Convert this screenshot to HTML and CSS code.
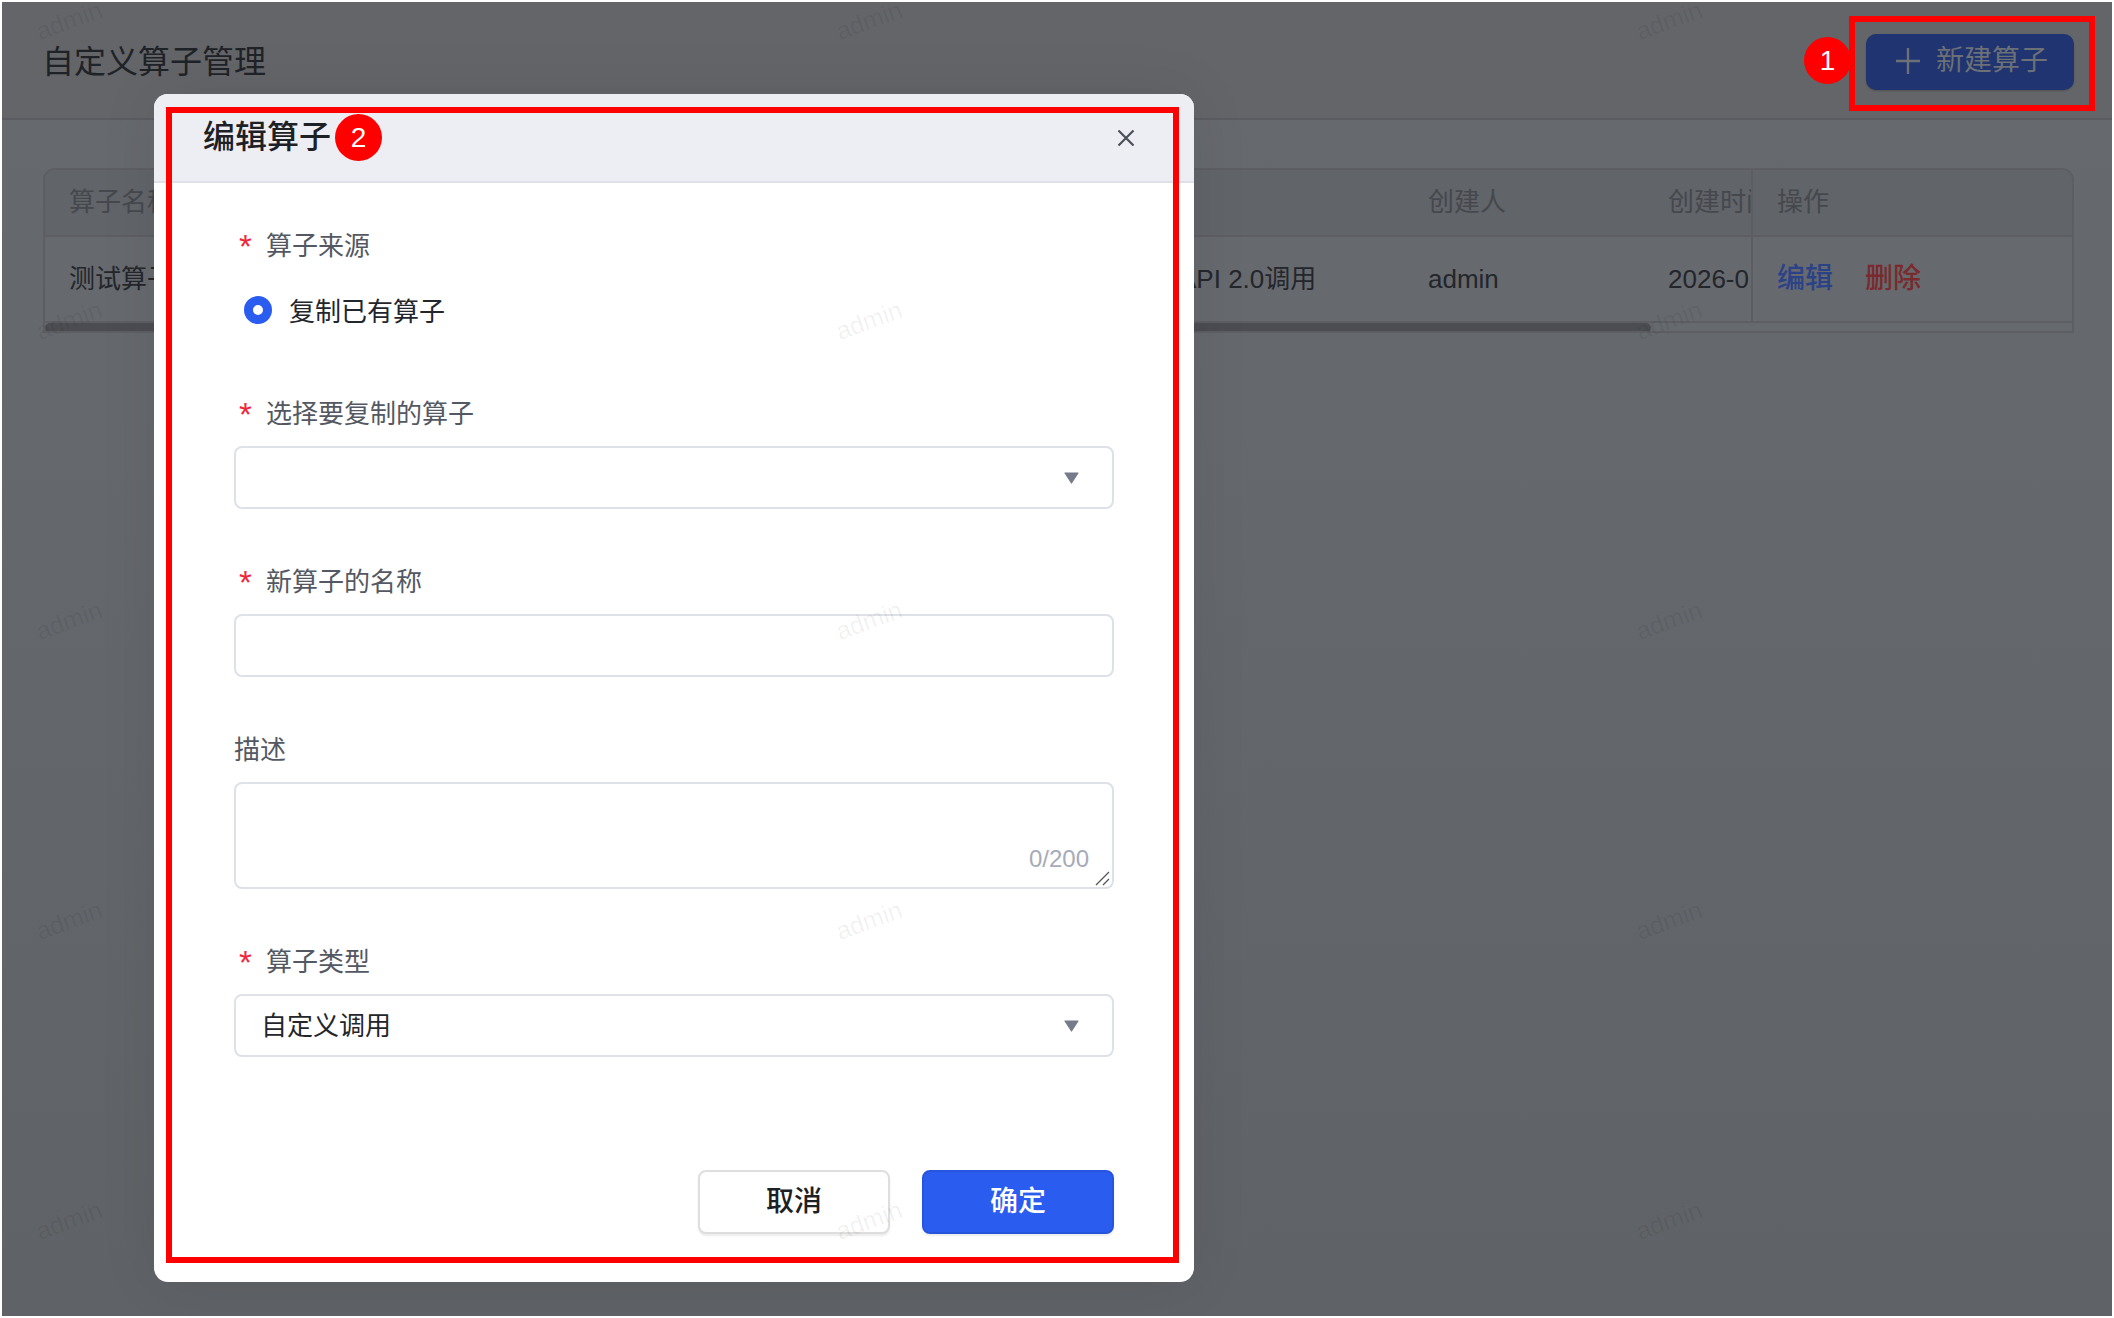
FILE: index.html
```html
<!DOCTYPE html>
<html lang="zh-CN">
<head>
<meta charset="utf-8">
<title>自定义算子管理</title>
<link rel="stylesheet" href="styles.css">
</head>
<body>
<div class="screen">
  <main class="page">
    <header class="page-header">
      <h1 class="page-title">自定义算子管理</h1>
      <button class="new-btn" type="button">
        <svg class="plus-icon" viewBox="0 0 24 26" width="24" height="26"><path d="M12 0v26M0 13h24" stroke="currentColor" stroke-width="2.4" fill="none"/></svg>
        <span>新建算子</span>
      </button>
    </header>
    <section class="table">
      <div class="table-main">
        <div class="t-row t-head">
          <div class="c c-name">算子名称</div>
          <div class="c c-type"></div>
          <div class="c c-user">创建人</div>
          <div class="c c-time">创建时间</div>
        </div>
        <div class="t-row t-body">
          <div class="c c-name">测试算子</div>
          <div class="c c-type">API 2.0调用</div>
          <div class="c c-user">admin</div>
          <div class="c c-time">2026-01-15</div>
        </div>
      </div>
      <div class="table-fixed">
        <div class="fixed-head">操作</div>
        <div class="fixed-body">
          <a class="link-edit">编辑</a>
          <a class="link-del">删除</a>
        </div>
      </div>
      <div class="scroll-track"><div class="scroll-thumb"></div></div>
    </section>
  </main>

  <div class="modal">
    <div class="modal-head">
      <h2 class="modal-title">编辑算子</h2>
      <svg class="close-icon" viewBox="0 0 18 18" width="18" height="18"><path d="M1.5 1.5l15 15M16.5 1.5l-15 15" stroke="currentColor" stroke-width="2.2" fill="none"/></svg>
    </div>
    <form class="modal-body">
      <div class="field">
        <div class="label"><span class="star">*</span>算子来源</div>
        <label class="radio-row"><span class="radio"></span><span>复制已有算子</span></label>
      </div>
      <div class="field">
        <div class="label"><span class="star">*</span>选择要复制的算子</div>
        <div class="select">
          <span></span>
          <svg class="caret" viewBox="0 0 16 12" width="17" height="12"><path d="M1.5 1h13L8 11z" fill="#767b8c" stroke="#767b8c" stroke-width="1.2" stroke-linejoin="round"/></svg>
        </div>
      </div>
      <div class="field">
        <div class="label"><span class="star">*</span>新算子的名称</div>
        <input class="input" type="text">
      </div>
      <div class="field">
        <div class="label">描述</div>
        <div class="area">
          <span class="count">0/200</span>
          <svg class="grip" viewBox="0 0 15 15" width="15" height="15"><path d="M1 14L14 1M8 14l6-6" stroke="#555" stroke-width="1.3" fill="none"/></svg>
        </div>
      </div>
      <div class="field">
        <div class="label"><span class="star">*</span>算子类型</div>
        <div class="select">
          <span class="select-value">自定义调用</span>
          <svg class="caret" viewBox="0 0 16 12" width="17" height="12"><path d="M1.5 1h13L8 11z" fill="#767b8c" stroke="#767b8c" stroke-width="1.2" stroke-linejoin="round"/></svg>
        </div>
      </div>
      <div class="footer">
        <button class="btn btn-cancel" type="button">取消</button>
        <button class="btn btn-ok" type="button">确定</button>
      </div>
    </form>
  </div>

  <div class="watermarks">
    <span>admin</span><span>admin</span><span>admin</span>
    <span>admin</span><span>admin</span><span>admin</span>
    <span>admin</span><span>admin</span><span>admin</span>
    <span>admin</span><span>admin</span><span>admin</span>
    <span>admin</span><span>admin</span><span>admin</span>
  </div>

  <div class="mark mark-one"></div>
  <div class="mark mark-two"></div>
  <div class="badge badge-one">1</div>
  <div class="badge badge-two">2</div>
</div>
</body>
</html>
```

FILE: styles.css
```css
* { box-sizing: border-box; }
html, body { margin: 0; padding: 0; }
body {
  background: #fff;
  font-family: "Liberation Sans", "Noto Sans CJK SC", sans-serif;
  font-size: 26px;
}
.screen {
  position: relative;
  width: 2114px;
  height: 1318px;
  padding: 2px;
  overflow: hidden;
  background: #fff;
}
.page {
  height: 1314px;
  background: linear-gradient(#66696e, #65686d 30%, #5f6266);
  display: flex;
  flex-direction: column;
}
.page-header {
  height: 118px;
  flex: none;
  padding: 0 38px 0 40px;
  border-bottom: 2px solid #5a5c61;
  background: #636569;
  display: flex;
  align-items: center;
  justify-content: space-between;
}
.page-title {
  margin: 4px 0 0;
  font-size: 32px;
  line-height: 44px;
  font-weight: 400;
  color: #1f2226;
}
.new-btn {
  width: 208px;
  height: 56px;
  margin-top: 4px;
  padding: 0 0 0 30px;
  border: 0;
  border-radius: 10px;
  background: #1f3470;
  color: #6c7077;
  font: inherit;
  font-size: 28px;
  line-height: 36px;
  display: flex;
  align-items: center;
  gap: 16px;
  box-shadow: 0 1px 2px rgba(0,0,0,.2);
}
.new-btn span { margin-top: -2px; }
.plus-icon { flex: none; margin-top: -2px; }

.table {
  position: relative;
  width: 2031px;
  height: 165px;
  margin: 48px 0 0 41px;
  border: 2px solid #5c5e63;
  border-radius: 12px 12px 0 0;
  background: #66696e;
  overflow: hidden;
  display: flex;
  flex-wrap: wrap;
}
.table-main { width: 1706px; }
.t-row { display: flex; align-items: center; }
.t-head {
  height: 67px;
  padding-bottom: 2px;
  background: #616469;
  border-bottom: 2px solid #5c5e63;
  color: #45484d;
}
.t-body { height: 84px; color: #23262b; }
.c { padding-left: 24px; line-height: 36px; white-space: nowrap; overflow: hidden; }
.c-name { width: 1107px; }
.c-type { width: 252px; padding-left: 27px; }
.c-user { width: 240px; }
.c-time { width: 107px; }
.table-fixed {
  width: 321px;
  border-left: 2px solid #5c5e63;
}
.fixed-head {
  height: 67px;
  padding: 0 0 2px 24px;
  background: #616469;
  border-bottom: 2px solid #5c5e63;
  color: #45484d;
  line-height: 36px;
  display: flex;
  align-items: center;
}
.fixed-body {
  height: 84px;
  padding-left: 24px;
  display: flex;
  align-items: center;
  gap: 32px;
  font-size: 28px;
  line-height: 36px;
  font-weight: 500;
}
.link-edit { color: #2b4287; }
.link-del { color: #7a2a2d; }
.scroll-track {
  width: 100%;
  height: 12px;
  border-top: 2px solid #5c5e63;
  background: #66696e;
}
.scroll-thumb {
  width: 1606px;
  height: 10px;
  border-radius: 5px;
  background: #4b4d52;
}

.modal {
  position: absolute;
  left: 154px;
  top: 94px;
  width: 1040px;
  height: 1188px;
  border-radius: 14px;
  background: #fff;
  box-shadow: 0 0 60px rgba(0,0,0,.08);
  display: flex;
  flex-direction: column;
  overflow: hidden;
}
.modal-head {
  height: 89px;
  flex: none;
  padding: 0 59px 2px 49px;
  background: #eceef3;
  border-bottom: 2px solid #dfe1e8;
  display: flex;
  align-items: center;
  justify-content: space-between;
}
.modal-title {
  margin: 0;
  font-size: 32px;
  line-height: 44px;
  font-weight: 500;
  color: #1d2025;
}
.close-icon { color: #4b4f5b; margin-top: 2px; }
.modal-body {
  flex: 1;
  padding: 45px 80px 48px;
  display: flex;
  flex-direction: column;
  gap: 55px;
}
.field { display: flex; flex-direction: column; gap: 16px; }
.label {
  height: 34px;
  padding-top: 2px;
  line-height: 32px;
  color: #545862;
  display: flex;
  align-items: center;
}
.star {
  width: 32px;
  padding: 2px 0 0 5px;
  color: #f0283c;
  font-size: 33px;
  line-height: 32px;
  flex: none;
}
.radio-row {
  height: 63px;
  padding-left: 10px;
  color: #23262b;
  display: flex;
  align-items: center;
  gap: 17px;
}
.radio {
  width: 28px;
  height: 28px;
  border-radius: 50%;
  border: 9px solid #2a5cf0;
  background: #fff;
  flex: none;
}
.select, .input, .area {
  width: 880px;
  border: 2px solid #dfe1e8;
  border-radius: 8px;
  background: #fff;
  color: #23262b;
  font: inherit;
}
.select, .input { height: 63px; display: flex; align-items: center; }
.select { padding: 0 32px 0 25px; justify-content: space-between; }
.select-value { line-height: 34px; }
.caret { flex: none; margin-top: 1px; }
.area { position: relative; height: 107px; }
.count {
  position: absolute;
  right: 23px;
  bottom: 14px;
  font-size: 24px;
  line-height: 28px;
  color: #a6abb8;
}
.grip { position: absolute; right: 2px; bottom: 1px; }
.footer {
  margin-top: auto;
  display: flex;
  justify-content: flex-end;
  gap: 32px;
}
.btn {
  width: 192px;
  height: 64px;
  border-radius: 8px;
  font: inherit;
  font-size: 28px;
  line-height: 36px;
  font-weight: 500;
  box-shadow: 0 2px 2px rgba(0,0,0,.08);
}
.btn-cancel { background: #fff; border: 2px solid #dedede; color: #1d2025; }
.btn-ok { background: #2a5cf0; border: 2px solid #2654dd; color: #fff; }

.watermarks {
  position: absolute;
  left: -331px;
  top: -130px;
  display: grid;
  grid-template-columns: repeat(3, 800px);
  grid-auto-rows: 300px;
  place-items: center;
  pointer-events: none;
}
.watermarks span {
  font-size: 25px;
  color: rgba(0,0,0,.06);
  transform: rotate(-20deg);
}

.mark {
  position: absolute;
  border: 6px solid #f00;
  pointer-events: none;
}
.mark-one { left: 1849px; top: 16px; width: 246px; height: 95px; }
.mark-two { left: 166px; top: 107px; width: 1013px; height: 1156px; }
.badge {
  position: absolute;
  width: 47px;
  height: 47px;
  border-radius: 50%;
  background: #f00;
  color: #fff;
  font-size: 28px;
  display: flex;
  align-items: center;
  justify-content: center;
}
.badge-one { left: 1804px; top: 37px; }
.badge-two { left: 335px; top: 114px; }
```
